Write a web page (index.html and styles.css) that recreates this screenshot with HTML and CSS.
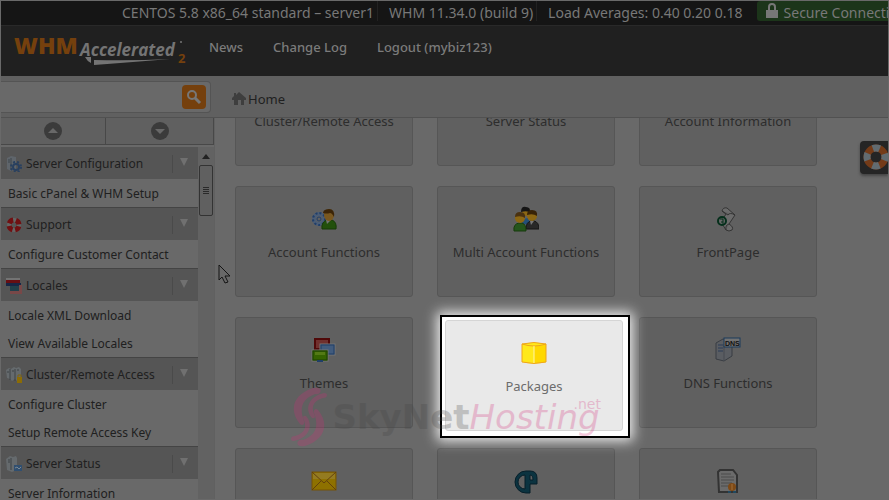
FILE: index.html
```html
<!DOCTYPE html>
<html lang="en">
<head>
    <meta charset="UTF-8">
    <meta name="viewport" content="width=device-width, initial-scale=1.0">
    <title>WHM Accelerated 2</title>
    <link rel="stylesheet" href="styles.css">
</head>
<body>

<div class="page">
    <div class="topbar">
        <span class="stat">CENTOS 5.8 x86_64 standard – server1</span>
        <span class="stat">WHM 11.34.0 (build 9)</span>
        <span class="stat">Load Averages: 0.40 0.20 0.18</span>
        <span class="secure">
            <svg width="12" height="16" viewBox="0 0 12 16"><path d="M3 8V4a3 3 0 0 1 6 0v4" fill="none" stroke="#777" stroke-width="2"/><rect y="7" width="12" height="8" fill="#777"/></svg>
            Secure Connection
        </span>
    </div>

    <header class="header">
        <svg class="logo" width="176" height="36" viewBox="0 0 176 36">
            <text class="logo-whm" x="1" y="23">WHM</text>
            <text class="logo-acc" x="67" y="25">Accelerated</text>
            <path d="M72 26l6 0 0 6q-4-2-6-6zM81 29q38 1 76-1q-36 3-76 6z" fill="#747474"/>
            <circle cx="168" cy="11" r="1" fill="#747474"/>
            <text class="logo-two" x="165" y="32">2</text>
        </svg>
        <nav class="nav">
            <a href="#">News</a>
            <a href="#">Change Log</a>
            <a href="#">Logout (mybiz123)</a>
        </nav>
    </header>

    <div class="toolbar">
        <form class="search">
            <input type="text" aria-label="Search">
            <button type="button" aria-label="Find">
                <svg width="16" height="16" viewBox="0 0 16 16"><circle cx="6" cy="6" r="4" fill="none" stroke="#777" stroke-width="2"/><path d="M9 9l5 5" stroke="#777" stroke-width="3"/></svg>
            </button>
        </form>
        <a class="home" href="#">
            <svg width="14" height="13" viewBox="0 0 14 13"><path d="M7 0l7 6v2h-2v5H9V8H6v5H2V8H0V6l2-2V1h2v2z" fill="#3e3e3e"/></svg>
            Home
        </a>
    </div>

    <div class="content">
        <aside class="sidebar">
            <div class="fold">
                <button type="button" aria-label="Collapse all"><svg width="18" height="18" viewBox="0 0 18 18"><circle cx="9" cy="9" r="9" fill="#3b3b3b"/><path d="M4 11l5-5 5 5z" fill="#686868"/></svg></button>
                <button type="button" aria-label="Expand all"><svg width="18" height="18" viewBox="0 0 18 18"><circle cx="9" cy="9" r="9" fill="#3b3b3b"/><path d="M4 7l5 5 5-5z" fill="#686868"/></svg></button>
            </div>
            <div class="scroller">
                <div class="menu">
                    <h2>
                        <svg width="16" height="16" viewBox="0 0 16 16"><path d="M1 2l4-2 5 1v12l-5 2-4-2z" fill="#5f656b"/><path d="M5 2v12M2 4h2M2 6h2" stroke="#3f464d"/><circle cx="10" cy="11" r="3" fill="none" stroke="#29405f" stroke-width="2" /><circle cx="10" cy="11" r="5" fill="none" stroke="#29405f" stroke-width="2" stroke-dasharray="2 2"/></svg>
                        Server Configuration<button type="button" aria-label="Toggle"></button>
                    </h2>
                    <a href="#">Basic cPanel &amp; WHM Setup</a>
                    <h2>
                        <svg width="16" height="16" viewBox="0 0 16 16"><circle cx="8" cy="8" r="5" fill="none" stroke="#666" stroke-width="4"/><circle cx="8" cy="8" r="5" fill="none" stroke="#701012" stroke-width="5" stroke-dasharray="5 2.854" stroke-dashoffset="-1.4"/></svg>
                        Support<button type="button" aria-label="Toggle"></button>
                    </h2>
                    <a href="#">Configure Customer Contact</a>
                    <h2>
                        <svg width="16" height="16" viewBox="0 0 16 16"><path d="M0 0h14v2H0z" fill="#737373"/><path d="M0 2h14v3H0z" fill="#680e12"/><path d="M0 5h15v3H0z" fill="#182646"/><path d="M13 7h3v9H4v-3h9z" fill="#784848"/><path d="M4 8h9v5H4z" fill="#21404b"/></svg>
                        Locales<button type="button" aria-label="Toggle"></button>
                    </h2>
                    <a href="#">Locale XML Download</a>
                    <a href="#">View Available Locales</a>
                    <h2>
                        <svg width="16" height="16" viewBox="0 0 16 16"><path d="M0 3l3-2 2 1 3-2 2 1 3-1 2 2v11l-4 1-2-2-3 2-2-2-3-1z" fill="#656a6d"/><path d="M4 2v11M9 2v12M1 5h2M6 4h2M11 3h2" stroke="#3e4346"/><path d="M12 10V8h3v2" fill="none" stroke="#806510"/><rect x="11" y="10" width="5" height="6" fill="#8c6c05"/></svg>
                        Cluster/Remote Access<button type="button" aria-label="Toggle"></button>
                    </h2>
                    <a href="#">Configure Cluster</a>
                    <a href="#">Setup Remote Access Key</a>
                    <h2>
                        <svg width="16" height="16" viewBox="0 0 16 16"><path d="M0 3l4-3 3 1 3-1 1 2v12l-5 2-5-2z" fill="#656a6d"/><path d="M5 2v12M2 4h2M2 6h2" stroke="#3e4346"/><rect x="8" y="9" width="8" height="6" fill="#304f70"/><path d="M9 12l2-1 2 2 2-2" fill="none" stroke="#7b8791"/></svg>
                        Server Status<button type="button" aria-label="Toggle"></button>
                    </h2>
                    <a href="#">Server Information</a>
                </div>
                <div class="scrollbar">
                    <svg width="8" height="5" viewBox="0 0 8 5"><path d="M0 5l4-5 4 5z" fill="#222"/></svg>
                    <div class="thumb"></div>
                </div>
            </div>
        </aside>

        <main class="main">
            <div class="grid">
                <a class="card" href="#"><span class="icon"></span>Cluster/Remote Access</a>
                <a class="card" href="#"><span class="icon"></span>Server Status</a>
                <a class="card" href="#"><span class="icon"></span>Account Information</a>
                <a class="card" href="#">
                    <svg class="icon" viewBox="0 0 26 26"><circle cx="8" cy="13" r="5" fill="none" stroke="#4b5d76" stroke-width="4"/><circle cx="8" cy="13" r="6" fill="none" stroke="#203e69" stroke-width="2" stroke-dasharray="2 2"/><circle cx="8" cy="13" r="2" fill="none" stroke="#203e69"/><path d="M11 23q-1-7 5-9h5q5 2 4 9z" fill="#22500c" stroke="#173b09"/><path d="M15 14l1 4 4-4z" fill="#737373"/><ellipse cx="18" cy="9" rx="5" ry="6" fill="#795820"/><path d="M12 9q-1-6 6-6 6 0 5 8-2-4-4-4-4 1-7 0z" fill="#3c2508"/></svg>
                    Account Functions
                </a>
                <a class="card" href="#">
                    <svg class="icon" viewBox="0 0 26 26"><path d="M9 18q0-6 6-6l3 7z" fill="#235078"/><circle cx="13" cy="6" r="4" fill="#8c6713"/><path d="M8 6q0-6 5-5 5 0 4 6-2-3-9-1z" fill="#151515"/><path d="M13 23q0-7 5-8h3q5 1 5 8z" fill="#282828" stroke="#151515"/><path d="M17 15l1 4 3-4z" fill="#777"/><circle cx="19" cy="10" r="5" fill="#8c6713"/><path d="M14 9q0-5 5-5 6 0 5 6-4-3-10-1z" fill="#382307"/><path d="M1 25q-1-7 5-8h3q4 1 4 8z" fill="#25551b" stroke="#173b0c"/><circle cx="7" cy="12" r="5" fill="#8c6713"/><path d="M2 11q0-5 5-5 6 0 5 6-4-3-10-1z" fill="#4a3211"/></svg>
                    Multi Account Functions
                </a>
                <a class="card" href="#">
                    <svg class="icon" viewBox="0 0 26 26"><path d="M7 5q1-4 5-3l8 7-6 9q5 3 3 6-3 2-6 0l-5-8 5-8zM7 5l6 4q2-3 7 0M14 18q-4 1-3 6" fill="#6b6b6b" stroke="#343434"/><circle cx="7" cy="15" r="4" fill="#666" stroke="#052f1b" stroke-width="2"/><path d="M5 13h3v3M9 17H7v-2" fill="none" stroke="#052f1b"/></svg>
                    FrontPage
                </a>
                <a class="card" href="#">
                    <svg class="icon" viewBox="0 0 26 26"><rect x="4" y="2" width="14" height="10" fill="#70302e" stroke="#500909" stroke-width="2"/><rect x="9" y="7" width="15" height="11" fill="#415b7d" stroke="#747474"/><rect x="10" y="8" width="13" height="9" fill="none" stroke="#203f67"/><rect x="1" y="13" width="16" height="11" fill="#356300" stroke="#747474"/><rect x="2" y="14" width="14" height="9" fill="none" stroke="#1d4104"/><path d="M4 15h10v3H4z" fill="#537a15"/><path d="M6 24h6" stroke="#203f67" stroke-width="2"/></svg>
                    Themes
                </a>
                <div class="spot-cell">
                    <div class="spot">
                        <a class="card" href="#">
                            <svg class="icon" viewBox="0 0 26 26"><path d="M1 4q12-3 24 0v18q-12 3-24 0z" fill="#ffe91a"/><path d="M13 6q8 0 12-2v18q-4 1-12 1z" fill="#ffd800"/><path d="M1 4q12-3 24 0v18q-12 3-24 0zM1 4q12 4 24 0" fill="none" stroke="#efa51b"/><path d="M13 6v17" stroke="#fff5aa"/></svg>
                            Packages
                        </a>
                    </div>
                </div>
                <a class="card" href="#">
                    <svg class="icon" viewBox="0 0 26 26"><path d="M1 6l7-4 9 3v14l-8 5-8-2z" fill="#5a5d62" stroke="#393d43"/><path d="M9 7v17M9 7l8-2" stroke="#474b51"/><path d="M3 8h5M3 11h5M3 14h5" stroke="#2a3c56"/><rect x="9" y="1" width="16" height="9" fill="#727272" stroke="#1b3a5b"/><text class="dns" x="10" y="9">DNS</text></svg>
                    DNS Functions
                </a>
                <a class="card" href="#">
                    <svg class="icon" viewBox="0 0 26 26"><rect x="1" y="4" width="24" height="18" fill="#8e7100" stroke="#755307"/><path d="M2 5h22v6H2z" fill="#947b20"/><path d="M1 4l12 11L25 4M1 22l9-9M25 22l-9-9" fill="none" stroke="#63400e"/></svg>
                </a>
                <a class="card" href="#">
                    <svg class="icon" viewBox="0 0 26 26"><path d="M13 3h4q7 0 7 7v6h-7v9h-4a11 11 0 0 1 0-22z" fill="#0b3340" stroke="#061e29"/><path d="M12 7v14a7 7 0 0 1 0-14zM17 7q3 0 3 5h-3z" fill="#606060" stroke="#061e29"/></svg>
                </a>
                <a class="card" href="#">
                    <svg class="icon" viewBox="0 0 26 26"><path d="M5 2h13l4 5v17H4L3 4z" fill="#6b6b6b" stroke="#333" stroke-width="2"/><path d="M6 6h10M6 9h13M6 12h13M6 15h11M6 18h8" stroke="#4d4d4d"/><circle cx="17" cy="19" r="4" fill="#7d4916"/><path d="M17 16v6" stroke="#a37039"/><path d="M13 24h3M18 24h3" stroke="#20485f" stroke-width="2"/></svg>
                </a>
            </div>
        </main>
    </div>

    <a class="help" href="#" aria-label="Help">
        <svg width="26" height="26" viewBox="0 0 26 26"><circle cx="13" cy="13" r="9" fill="none" stroke="#743b18" stroke-width="7"/><circle cx="13" cy="13" r="9" fill="none" stroke="#626b70" stroke-width="7" stroke-dasharray="7 7.137" stroke-dashoffset="3.5"/></svg>
    </a>

    <svg class="cursor" width="13" height="20" viewBox="0 0 13 20"><path d="M1 1v15l3-3 3 6 3-1-3-6h5z" fill="#686868" stroke="#151515"/></svg>

    <div class="watermark">
        <svg width="39" height="60" viewBox="0 0 39 60" fill="#d42a78">
            <defs>
                <g id="swirl">
                    <path d="M31 2C33 5 30 8 26 7C13 12 10 21 15 34C16 38 13 39 11 37C0 24 3 8 24 1Q29 0 31 2z"/>
                    <path d="M38 8q0 3-4 3C23 14 22 21 26 29q0 3-3 2C15 22 20 9 35 6q3 0 3 2z"/>
                </g>
            </defs>
            <use href="#swirl"/>
            <use href="#swirl" transform="rotate(180 20 30)"/>
        </svg>
        <span class="wm-sky">SkyNet</span><span class="wm-host">Hosting</span><span class="wm-net">.net</span>
    </div>
</div>

</body>
</html>
```
FILE: styles.css
```css
* {
    box-sizing: border-box;
}
body {
    margin: 0;
    background-color: #696969;
    color: #202020;
    font-family: "Noto Sans", "Open Sans", sans-serif;
    font-size: 13px;
    line-height: 20px;
}
a {
    color: inherit;
    text-decoration: none;
}
button {
    padding: 0;
    border: none;
    background: none;
    cursor: pointer;
}
svg {
    flex: none;
}
.page {
    position: relative;
    display: flex;
    flex-direction: column;
    height: 100vh;
    overflow: hidden;
    border: 1px solid #696969;
}

/* top bars */
.topbar {
    display: flex;
    flex: none;
    height: 25px;
    padding-left: 121px;
    overflow: hidden;
    white-space: nowrap;
    background-color: #151515;
    border-bottom: 1px solid #292929;
    color: #787878;
    font-size: 14px;
    line-height: 23px;
}
.stat {
    flex: none;
    height: 20px;
    margin-right: 11px;
    padding-right: 3px;
    border-right: 1px solid #222;
}
.stat:nth-child(3) {
    border: none;
}
.secure {
    display: flex;
    flex: none;
    gap: 6px;
    height: 20px;
    padding: 0 9px;
    background-color: #1c351a;
    border-radius: 3px;
}
.secure svg {
    margin-top: 2px;
}
.header {
    display: flex;
    flex: none;
    align-items: center;
    height: 50px;
    padding-left: 12px;
    background-color: #202020;
    color: #7b7b7b;
}
.nav {
    display: flex;
    gap: 30px;
    margin: 0 0 8px 20px;
    font-weight: 500;
}
.logo {
    margin-bottom: 4px;
    font-family: "Open Sans", sans-serif;
    font-weight: bold;
}
.logo-whm {
    fill: #75400d;
    font-size: 23px;
    font-weight: 800;
}
.logo-acc {
    fill: #747474;
    font-size: 17px;
    font-style: italic;
}
.logo-two {
    fill: #75400d;
    font-size: 13px;
}
.toolbar {
    display: flex;
    flex: none;
    align-items: center;
    height: 42px;
    background-color: #606060;
    border-bottom: 1px solid #515151;
}
.search {
    display: flex;
    align-items: center;
    width: 210px;
    height: 32px;
    padding-right: 4px;
    margin-right: 21px;
    background-color: #696969;
    border: 1px solid #545454;
    border-left: none;
    border-radius: 0 4px 4px 0;
}
.search input {
    flex: 1;
    min-width: 0;
    height: 28px;
    border: none;
    outline: none;
    background: none;
}
.search button {
    display: flex;
    align-items: center;
    justify-content: center;
    width: 24px;
    height: 24px;
    background-color: #75400d;
    border-radius: 4px;
}
.home {
    display: flex;
    align-items: center;
    gap: 2px;
    margin-top: 4px;
}

/* sidebar */
.content {
    display: flex;
    flex: 1;
    min-height: 0;
}
.sidebar {
    display: flex;
    flex: none;
    flex-direction: column;
    width: 214px;
    border-right: 1px solid #606060;
}
.fold {
    display: grid;
    flex: none;
    grid-template-columns: 105px 1fr;
    height: 27px;
    margin-bottom: 2px;
    background-color: #606060;
    border-bottom: 1px solid #484848;
}
.fold button {
    display: flex;
    align-items: center;
    justify-content: center;
    border-right: 1px solid #484848;
}
.scroller {
    display: flex;
    flex: 1;
    min-height: 0;
}
.menu {
    flex: 1;
    overflow: hidden;
    font-size: 12px;
}
.menu h2 {
    display: flex;
    align-items: center;
    gap: 4px;
    height: 33px;
    margin: 0;
    padding: 2px 0 0 5px;
    background-color: #555;
    border-top: 1px solid #444;
    font-size: 12px;
    font-weight: normal;
}
.menu h2:first-child {
    height: 32px;
    border-top: none;
}
.menu h2 button {
    display: flex;
    justify-content: center;
    width: 26px;
    height: 18px;
    padding-right: 4px;
    margin-left: auto;
    border-left: 1px solid #4a4a4a;
}
.menu h2 button::before {
    content: "";
    width: 0;
    height: 0;
    margin-top: 3px;
    border: 4px solid transparent;
    border-top: 8px solid #707070;
    border-bottom: none;
}
.menu a {
    display: block;
    height: 28px;
    padding-left: 7px;
    line-height: 30px;
}
.scrollbar {
    display: flex;
    flex-direction: column;
    align-items: center;
    gap: 6px;
    width: 16px;
    padding-top: 7px;
    background-color: #626262;
}
.thumb {
    display: flex;
    align-items: center;
    justify-content: center;
    width: 14px;
    height: 51px;
    background-color: #606060;
    border: 1px solid #333;
    border-radius: 2px;
}
.thumb::before {
    content: "";
    width: 6px;
    height: 8px;
    background: repeating-linear-gradient(#2a2a2a 0 1px, #606060 1px 2px);
}

/* function cards */
.main {
    flex: 1;
    min-width: 0;
    padding-left: 20px;
    overflow: hidden;
}
.grid {
    display: grid;
    grid-template-columns: repeat(auto-fill, 178px);
    gap: 20px 24px;
    margin-top: -63px; /* scrolled down past the first row */
}
.card {
    display: flex;
    flex-direction: column;
    align-items: center;
    gap: 10px;
    height: 111px;
    padding-top: 19px;
    background-color: #606060;
    border: 1px solid #565656;
    border-radius: 3px;
    color: #2d2d2d;
}
.icon {
    width: 26px;
    height: 26px;
}
.dns {
    fill: #111;
    font-family: "Liberation Sans", sans-serif;
    font-size: 7px;
    font-weight: bold;
}
.spot-cell {
    position: relative;
    height: 111px;
}
.spot {
    position: absolute;
    top: -2px;
    left: 3px;
    width: 190px;
    padding: 3px 5px 5px 3px;
    background-color: #fff;
    border: 2px solid #000;
    box-shadow: 0 0 12px 3px #eee;
}
.spot .card {
    background-color: #e9e9e9;
    border-color: #d5d5d5;
    color: #6c6c6c;
}

/* things floating over the page */
.help {
    position: absolute;
    top: 140px;
    right: 0;
    width: 28px;
    height: 33px;
    padding: 3px 0 0 3px;
    overflow: hidden;
    background-color: #252525;
    border-radius: 4px 0 0 4px;
    box-shadow: 0 2px 3px #444;
}
.cursor {
    position: absolute;
    top: 263px;
    left: 217px;
}
.watermark {
    position: absolute;
    right: 0;
    bottom: 52px;
    left: 0;
    display: flex;
    justify-content: center;
    height: 60px;
    opacity: 0.25;
    pointer-events: none;
    font-family: "DejaVu Sans", sans-serif;
    font-size: 34px;
    line-height: 60px;
}
.wm-sky {
    margin-left: 4px;
    color: #444;
    font-weight: bold;
}
.wm-host {
    color: #d42a78;
    font-style: italic;
}
.wm-net {
    width: 0;
    margin-left: -26px;
    margin-right: 26px;
    color: #d42a78;
    font-size: 14px;
    line-height: 34px;
}
```
